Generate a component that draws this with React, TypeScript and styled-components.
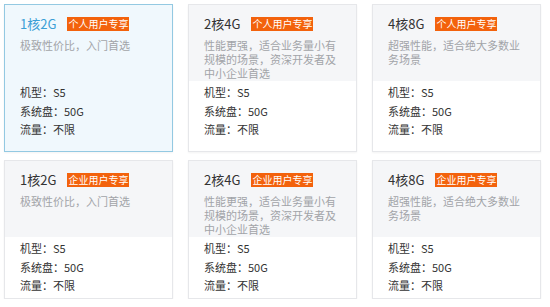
import React from "react"
import styled, { createGlobalStyle } from "styled-components"

const Global = createGlobalStyle`
body{
margin:0;
background:#fff;
font-family: "Noto Sans CJK SC", "Noto Sans", sans-serif;
}
`;

const Grid = styled.div`
display: grid;
grid-template-columns: repeat(3, 169px);
grid-template-rows: 148px 139px;
column-gap: 15px;
row-gap: 8px;
padding: 4px 0 0 4px;
`;

const Card = styled.div<{ $active?: boolean }>`
display: flex;
flex-direction: column;
box-sizing: border-box;
border: 1px solid ${p => p.$active ? "#93c9e2" : "#e6e7ea"};
background: ${p => p.$active ? "#f0f8fd" : "#fff"};
box-shadow: 0 1px 2px rgba(0,0,0,0.05);
overflow: hidden;
`;

const Top = styled.div<{ $active?: boolean }>`
min-height: 76px;
flex-shrink: 0;
box-sizing: border-box;
padding: 11px 15px 0 15px;
background: ${p => p.$active ? "transparent" : "#f5f6f8"};
`;

const Head = styled.div`
display: flex;
align-items: center;
height: 16px;
gap: 11px;
`;

const Title = styled.span<{ $active?: boolean }>`
font-size: 13px;
line-height: 16px;
color: ${p => p.$active ? "#3b9fd6" : "#333"};
`;

const Badge = styled.span`
display: inline-block;
background: #f3620c;
color: #fff;
font-size: 10px;
line-height: 14px;
height: 14px;
padding: 0 1px;
`;

const Desc = styled.div`
margin-top: 6px;
font-size: 11px;
line-height: 14px;
color: #a2a4a8;
`;

const Specs = styled.ul`
list-style: none;
margin: 0;
padding: 2px 15px 0 15px;
`;

const Spec = styled.li`
font-size: 11px;
line-height: 18.5px;
color: #333;
`;

const plans = [
  { title: "1核2G", desc: "极致性价比，入门首选" },
  { title: "2核4G", desc: "性能更强，适合业务量小有规模的场景，资深开发者及中小企业首选" },
  { title: "4核8G", desc: "超强性能，适合绝大多数业务场景" },
];

const groups = ["个人用户专享", "企业用户专享"];

const App = () => {
  return (
    <>
      <Global />
      <Grid>
        {groups.map((g, gi) =>
          plans.map((p, pi) => {
            const active = gi === 0 && pi === 0;
            return (
              <Card key={g + pi} $active={active}>
                <Top $active={active}>
                  <Head>
                    <Title $active={active}>{p.title}</Title>
                    <Badge>{g}</Badge>
                  </Head>
                  <Desc>{p.desc}</Desc>
                </Top>
                <Specs>
                  <Spec>机型：S5</Spec>
                  <Spec>系统盘：50G</Spec>
                  <Spec>流量：不限</Spec>
                </Specs>
              </Card>
            );
          })
        )}
      </Grid>
    </>
  );
};

export default App;
